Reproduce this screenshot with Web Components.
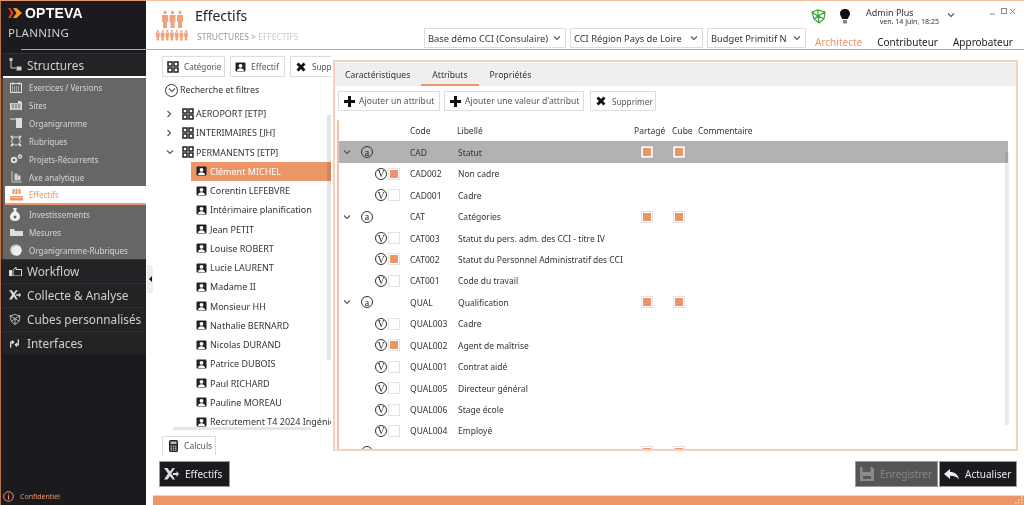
<!DOCTYPE html>
<html lang="fr">
<head>
<meta charset="utf-8">
<title>Effectifs</title>
<style>
html, body { margin: 0; height: 505px; overflow: hidden; background: #fff; }
body { font-family: "Noto Sans", "Open Sans", sans-serif; color: #333; }
</style>
</head>
<body>
<app-shell></app-shell>
<script>
const ORANGE = "#ec9668";

const ICONS = {
    cat: `<svg width="12" height="12" viewBox="0 0 12 12" fill="none" stroke="#222" stroke-width="1.5"><rect x="1" y="1" width="4" height="4"/><rect x="7" y="1" width="4" height="4"/><rect x="1" y="7" width="4" height="4"/><rect x="7" y="7" width="4" height="4"/></svg>`,
    badge: `<svg width="11" height="10" viewBox="0 0 11 10"><rect x=".5" y=".5" width="10" height="9" rx="1" fill="#222"/><circle cx="5.5" cy="3.8" r="1.9" fill="#fff"/><path d="M2 9c.3-2 1.6-2.8 3.5-2.8S8.700 7 9 9z" fill="#fff"/></svg>`,
    plus: `<svg style="margin-right:-2px" width="13" height="13" viewBox="0 0 13 13"><path d="M5 1h3v4h4v3H8v4H5V8H1V5h4z" fill="#111"/></svg>`,
    cross: `<svg width="12" height="12" viewBox="0 0 12 12"><path d="M1.500 3.500l2-2L6 4l2.500-2.500 2 2L8 6l2.500 2.500-2 2L6 8l-2.500 2.500-2-2L4 6z" fill="#111"/></svg>`,
    calc: `<svg width="9" height="12" viewBox="0 0 9 12"><rect width="9" height="12" rx="1.500" fill="#222"/><rect x="1.500" y="1.500" width="6" height="2.500" fill="#bbb"/><path d="M1.500 5.500h1.500v1.200H1.500zM3.800 5.500h1.500v1.200H3.800zM6 5.500h1.500v1.200H6zM1.500 7.500h1.500v1.200H1.500zM3.800 7.500h1.500v1.200H3.800zM6 7.500h1.500v1.200H6zM1.500 9.500h1.500v1.200H1.500zM3.800 9.500h1.500v1.200H3.800zM6 9.500h1.500v1.200H6z" fill="#ccc"/></svg>`,
    right: `<svg width="6" height="8" viewBox="0 0 6 8" fill="none" stroke="#555" stroke-width="1.100"><path d="M1.500 1l3 3-3 3"/></svg>`,
    down: `<svg width="8" height="6" viewBox="0 0 8 6" fill="none" stroke="#555" stroke-width="1.100"><path d="M1 1.500l3 3 3-3"/></svg>`,
    collect: `<svg width="15" height="12" viewBox="0 0 15 12"><path d="M0 0h3.500l2.500 3.500L8.500 0H11L7.300 5.500 11 11.500H8.500L6 8l-2.500 3.500H0l4-6z" fill="#ddd"/><path d="M9 5h3.500V3l2.500 3-2.500 3V7H9z" fill="#ddd"/></svg>`,
    save: `<svg width="14" height="14" viewBox="0 0 14 14"><path d="M0 0h2.500v5h8V0H12l2 2v12H0z" fill="#8a8a8a"/><rect x="3" y="9" width="8" height="3" fill="#555"/></svg>`,
    back: `<svg width="15" height="11" viewBox="0 0 15 11"><path d="M6 0v3c5 0 8 2.500 9 7.500-2-2.700-4.500-3.800-9-3.800V10L0 5z" fill="#eee"/></svg>`
};

const SIDE_ICONS = {
    structures: `<svg width="14" height="14" viewBox="0 0 14 14" fill="none" stroke="#ccc"><rect x="1" y="0.500" width="2" height="2" fill="#ccc"/><path d="M2 3v7h5"/><rect x="8" y="9" width="4" height="3" fill="#ccc"/></svg>`,
    exercices: `<svg width="12" height="11" viewBox="0 0 12 11" fill="none" stroke="#ddd"><rect x=".5" y="1.500" width="11" height="9"/><path d="M3 0v3M9 0v3"/><path d="M2 5h8M2 7h8M2 9h8" stroke-dasharray="1 1"/></svg>`,
    sites: `<svg width="12" height="10" viewBox="0 0 12 10"><path d="M0 3h8V1h3v1h1v8H0z" fill="#ddd"/><path d="M1 5h10M1 7h10M3 3v7M6 3v7M9 3v7" stroke="#666" stroke-width=".6"/></svg>`,
    orga: `<svg width="12" height="10" viewBox="0 0 12 10"><path d="M0 1h6" stroke="#ddd"/><rect x="6" y="0" width="6" height="10" fill="#ddd"/></svg>`,
    rubriques: `<svg width="12" height="12" viewBox="0 0 12 12" fill="none" stroke="#ddd"><circle cx="6" cy="6" r="4.200"/><path d="M1 1l2 2M11 1L9 3M1 11l2-2M11 11L9 9" stroke-width="2"/></svg>`,
    projets: `<svg width="13" height="10" viewBox="0 0 13 10" fill="none" stroke="#ddd"><circle cx="4" cy="6" r="2.200" stroke-width="2"/><circle cx="10" cy="2.500" r="1.500" stroke-width="1.400"/></svg>`,
    axe: `<svg width="12" height="12" viewBox="0 0 12 12" fill="none" stroke="#ccc"><path d="M2 0v11h10"/><rect x="5" y="3" width="2" height="6" fill="#ddd"/><rect x="8" y="5" width="2" height="4" fill="#ddd"/></svg>`,
    effectifs: `<svg width="13" height="12" viewBox="0 0 13 12" fill="${ORANGE}"><rect x="2.500" y="0" width="2" height="5"/><rect x="5.500" y="0" width="2" height="5"/><rect x="8.500" y="0" width="2" height="5"/><rect x="0" y="7" width="13" height="1.500"/><rect x="0" y="9" width="13" height="2.500"/></svg>`,
    invest: `<svg width="10" height="13" viewBox="0 0 10 13"><path d="M3 0h4L6 3c2.500 1.500 4 3.500 4 6 0 2.500-2 4-5 4s-5-1.500-5-4c0-2.500 1.500-4.500 4-6z" fill="#eee"/><circle cx="5" cy="9" r="1.500" fill="#666"/></svg>`,
    mesures: `<svg width="13" height="7" viewBox="0 0 13 7"><path d="M0 0h4l1 2h8v5H0z" fill="#ddd"/></svg>`,
    orgarub: `<svg width="12" height="12" viewBox="0 0 12 12" fill="none" stroke="#eee" stroke-width="1.200"><circle cx="6" cy="6" r="5"/><path d="M3 8.500A4 4 0 0 1 8.500 3L11 6A4.500 4.500 0 0 1 6 11z" fill="#eee"/></svg>`,
    workflow: `<svg width="13" height="9" viewBox="0 0 13 9"><rect x="0" y="3" width="3" height="6" fill="#ddd"/><path d="M4 3.500L7 0v2.500h5.500V9H4z" fill="none" stroke="#ddd"/></svg>`,
    collect: `<svg width="12" height="10" viewBox="0 0 15 12"><path d="M0 0h3.500l2.500 3.500L8.500 0H11L7.300 5.500 11 11.500H8.500L6 8l-2.500 3.500H0l4-6z" fill="#ddd"/><path d="M9 5h3.500V3l2.500 3-2.500 3V7H9z" fill="#ddd"/></svg>`,
    cubes: `<svg width="12" height="11" viewBox="0 0 13 12" fill="none" stroke="#ccc" stroke-width=".9"><path d="M1 2l5-1.500L12 2l-1 6-4.500 3.500L2.500 8z"/><path d="M1 2l5.500 3L12 2M6.500 5v6.500M2.500 8l4-3 4.500 3"/></svg>`,
    interfaces: `<svg width="11" height="9" viewBox="0 0 13 10" fill="none" stroke="#ddd" stroke-width="1.500"><path d="M2 10V3.500h3M3.500 1.500L5.500 3.500 3.500 5.500"/><path d="M11 0v6.500H8M9.500 8.500L7.500 6.500 9.500 4.500"/></svg>`
};

class SideItem extends HTMLElement {
    connectedCallback() {
        this.attachShadow({mode: "open"}).innerHTML = `
        <style>
        :host { display: flex; align-items: center; height: 18px; padding-left: 7px; font-size: 8px; color: #d6d6d6; white-space: nowrap; }
        :host([active]) { height: 17px; margin-left: 2px; padding-left: 5px; background: #fff; color: ${ORANGE}; border-bottom: 2px solid ${ORANGE}; }
        .ic { width: 19px; display: flex; align-items: center; }
        </style>
        <span class="ic">${SIDE_ICONS[this.getAttribute("icon")]}</span><slot></slot>`;
    }
}
customElements.define("side-item", SideItem);

class SideSection extends HTMLElement {
    connectedCallback() {
        this.attachShadow({mode: "open"}).innerHTML = `
        <style>
        :host { display: flex; align-items: center; box-sizing: border-box; height: 23px; margin: 0 0 1px 1px; padding-left: 7px; background: #232225; color: #d0d0d0; font-size: 11.800px; border-top: 1px solid #333; white-space: nowrap; }
        .ic { width: 18px; display: flex; flex: none; }
        </style>
        <span class="ic">${SIDE_ICONS[this.getAttribute("icon")]}</span><slot></slot>`;
    }
}
customElements.define("side-section", SideSection);

class SideBar extends HTMLElement {
    connectedCallback() {
        this.attachShadow({mode: "open"}).innerHTML = `
        <style>
        :host { display: flex; flex-direction: column; width: 145px; height: 504px; background: #1b1a1f; border-top: 1px solid ${ORANGE}; border-left: 1px solid #b5734e; position: relative; }
        .top { height: 48px; box-sizing: border-box; padding: 5px 0 0 7px; }
        .logo { display: flex; align-items: center; color: #fff; font: 700 14px/14px "Liberation Sans", sans-serif; letter-spacing: .2px; }
        .logo svg { margin-right: 3px; }
        .app { color: #d0d0d0; font-size: 11.500px; margin-top: 5px; letter-spacing: .3px; }
        .line { height: 1px; background: ${ORANGE}; margin-left: 20px; }
        .gap { height: 3px; }
        .sub { background: #666; border-left: 2px solid #5a3323; }
        .white { height: 2px; background: #fff; margin-left: 2px; }
        .foot { margin-top: auto; display: flex; align-items: center; gap: 6px; padding: 0 0 3px 2px; color: ${ORANGE}; font-size: 7px; }
        </style>
        <div class="top">
            <div class="logo"><svg width="14" height="10" viewBox="0 0 14 10"><path d="M0 0h2.500l3 5-3 5H0l3-5z" fill="#e23b22"/><path d="M5 0h3.500L14 5l-5.500 5H5l3.500-5z" fill="#f59a23"/></svg><span>OPTEVA</span></div>
            <div class="app">PLANNING</div>
        </div>
        <div class="line"></div>
        <div class="gap"></div>
        <side-section icon="structures" style="margin-bottom:0">Structures</side-section>
        <div class="white"></div>
        <div class="sub">
            <side-item icon="exercices">Exercices / Versions</side-item>
            <side-item icon="sites">Sites</side-item>
            <side-item icon="orga">Organigramme</side-item>
            <side-item icon="rubriques">Rubriques</side-item>
            <side-item icon="projets">Projets-Récurrents</side-item>
            <side-item icon="axe">Axe analytique</side-item>
            <side-item icon="effectifs" active>Effectifs</side-item>
            <side-item icon="invest">Investissements</side-item>
            <side-item icon="mesures">Mesures</side-item>
            <side-item icon="orgarub">Organigramme-Rubriques</side-item>
        </div>
        <side-section icon="workflow">Workflow</side-section>
        <side-section icon="collect">Collecte &amp; Analyse</side-section>
        <side-section icon="cubes">Cubes personnalisés</side-section>
        <side-section icon="interfaces">Interfaces</side-section>
        <div class="foot"><svg width="11" height="11" viewBox="0 0 11 11" fill="none" stroke="${ORANGE}"><circle cx="5.500" cy="5.500" r="4.800"/><path d="M5.500 2.500v1M5.500 4.500v4"/></svg><span>Confidentiel</span></div>`;
    }
}
customElements.define("side-bar", SideBar);

class ComboBox extends HTMLElement {
    connectedCallback() {
        this.attachShadow({mode: "open"}).innerHTML = `
        <style>
        :host { display: flex; align-items: center; justify-content: space-between; box-sizing: border-box; height: 20px; padding: 0 4px 0 3px; border: 1px solid #ddd; font-size: 9.300px; color: #333; white-space: nowrap; overflow: hidden; }
        svg { flex: none; margin-left: 4px; }
        </style>
        <slot></slot>${ICONS.down}`;
    }
}
customElements.define("combo-box", ComboBox);

class AppHeader extends HTMLElement {
    connectedCallback() {
        let people = "";
        for (let i = 0; i < 3; i++) people += `<use href="#p" transform="translate(${7 + i * 7.500} 10) scale(1)"/>`;
        for (let i = 0; i < 7; i++) people += `<use href="#p" transform="translate(${1 + i * 4.700} 29) scale(.62)"/>`;
        this.attachShadow({mode: "open"}).innerHTML = `
        <style>
        :host { display: flex; height: 48px; background: #fff; border-top: 1px solid #f5bfa2; border-bottom: 1px solid ${ORANGE}; }
        .pic { width: 40px; padding-left: 9px; flex: none; }
        .titles { flex: none; width: 229px; }
        h1 { margin: 6px 0 0; font-size: 14px; line-height: 18px; font-weight: 400; color: #222; }
        .crumb { margin: 6px 0 0 2px; font-size: 8.500px; line-height: 12px; color: #999; }
        .crumb span { color: #ccc; }
        .combos { display: flex; gap: 4px; align-self: flex-end; margin-bottom: 1px; flex: none; }
        .right { margin-left: 5px; flex: 1; display: flex; flex-direction: column; }
        .status { display: flex; height: 30px; align-items: flex-start; }
        .status .net { margin-top: 8px; }
        .status .bulb { margin: 8px 0 0 14px; }
        .who { margin: 6px 0 0 16px; font-size: 9px; line-height: 11px; color: #333; width: 73px; }
        .who small { display: block; font-size: 7px; line-height: 8px; text-align: right; color: #333; white-space: nowrap; }
        .chev { margin: 11px 0 0 8px; display: flex; }
        .win { margin: 6px 0 0 35px; display: flex; }
        .roles { display: flex; font-size: 10px; line-height: 22px; color: #222; padding-left: 4px; height: 18px; }
        .roles span { margin-right: 15px; white-space: nowrap; }
        .roles span:first-child { color: ${ORANGE}; }
        </style>
        <div class="pic"><svg width="36" height="42" viewBox="0 0 36 42" fill="#f2a27a"><defs><g id="p"><circle cx="3" cy="1.500" r="1.700"/><path d="M0 4h6v7H5v6H1v-6H0z"/></g></defs>${people}</svg></div>
        <div class="titles">
            <h1>Effectifs</h1>
            <div class="crumb">STRUCTURES &gt; <span>EFFECTIFS</span></div>
        </div>
        <div class="combos">
            <combo-box style="width:142px">Base démo CCI (Consulaire)</combo-box>
            <combo-box style="width:133px">CCI Région Pays de Loire</combo-box>
            <combo-box style="width:99px">Budget Primitif N</combo-box>
        </div>
        <div class="right">
            <div class="status">
                <svg class="net" width="15" height="15" viewBox="0 0 15 15" fill="none" stroke="#3aa335" stroke-width="1.200"><path d="M1 3l6-2 7 2-1 7-5 4-5-4zM1 3l6 4 7-4M7 7l1 7M3 10l4-3 6 3M7 1v6" /></svg>
                <svg class="bulb" width="10" height="15" viewBox="0 0 10 15"><path d="M5 0c3 0 5 2 5 4.800 0 2-1.500 3-2.200 5.200H2.200C1.500 7.800 0 6.800 0 4.800 0 2 2 0 5 0z" fill="#111"/><rect x="3" y="11" width="4" height="3.500" fill="#888"/></svg>
                <div class="who">Admin Plus<small>ven. 14 juin, 18:25</small></div>
                <span class="chev">${ICONS.down}</span>
                <div class="win">
                    <svg width="25" height="9" viewBox="0 0 25 9" fill="none" stroke="#888"><path d="M0 7h5"/><rect x="11.500" y="1.500" width="5" height="5"/><path d="M20 2l5 5M25 2l-5 5"/></svg>
                </div>
            </div>
            <div class="roles"><span>Architecte</span><span>Contributeur</span><span>Approbateur</span></div>
        </div>`;
    }
}
customElements.define("app-header", AppHeader);

class ToolBtn extends HTMLElement {
    connectedCallback() {
        this.attachShadow({mode: "open"}).innerHTML = `
        <style>
        :host { display: inline-flex; flex: none; align-items: center; box-sizing: border-box; height: 20px; padding: 0 3px 0 4px; gap: 5px; border: 1px solid #ddd; background: #fff; font-size: 8.600px; color: #555; white-space: nowrap; }
        span { display: flex; }
        </style>
        <span>${ICONS[this.getAttribute("icon")]}</span><slot></slot>`;
    }
}
customElements.define("tool-btn", ToolBtn);

class ActionBtn extends HTMLElement {
    connectedCallback() {
        this.attachShadow({mode: "open"}).innerHTML = `
        <style>
        :host { display: inline-flex; align-items: center; box-sizing: border-box; height: 26px; padding: 0 4px; gap: 6px; background: #1b1a1f; border: 1px solid #999; color: #e8e8e8; font-size: 10px; white-space: nowrap; }
        :host([disabled]) { background: #555; color: #888; }
        span { display: flex; }
        </style>
        <span>${ICONS[this.getAttribute("icon")]}</span><slot></slot>`;
    }
}
customElements.define("action-btn", ActionBtn);

class TreeRow extends HTMLElement {
    connectedCallback() {
        const kind = this.getAttribute("kind");
        const arrow = kind === "open" ? ICONS.down : ICONS.right;
        this.attachShadow({mode: "open"}).innerHTML = `
        <style>
        :host { display: flex; align-items: center; height: 19.250px; font-size: 9px; color: #333; white-space: nowrap; box-sizing: border-box; }
        :host([kind="leaf"]) { padding-left: 5px; margin-left: 29px; gap: 3px; }
        :host([selected]) { color: #fff; background: ${ORANGE}; }
        .a { width: 16px; margin-left: 4px; display: flex; }
        .g { margin-right: 2px; display: flex; }
        </style>
        ${kind === "leaf"
            ? `<span style="display:flex">${ICONS.badge}</span>`
            : `<span class="a">${arrow}</span><span class="g">${ICONS.cat}</span>`}
        <slot></slot>`;
    }
}
customElements.define("tree-row", TreeRow);

class TreePanel extends HTMLElement {
    connectedCallback() {
        const leaves = ["Clément MICHEL", "Corentin LEFEBVRE", "Intérimaire planification", "Jean PETIT", "Louise ROBERT", "Lucie LAURENT", "Madame II", "Monsieur HH", "Nathalie BERNARD", "Nicolas DURAND", "Patrice DUBOIS", "Paul RICHARD", "Pauline MOREAU", "Recrutement T4 2024 Ingénieur"];
        this.attachShadow({mode: "open"}).innerHTML = `
        <style>
        :host { display: flex; flex-direction: column; flex: none; width: 169px; margin-left: 9px; margin-right: 2px; height: 405px; padding-top: 6px; box-sizing: border-box; overflow: hidden; }
        .bar { display: flex; gap: 5px; height: 21px; overflow: hidden; flex: none; }
        .bar tool-btn { height: 21px; }
        .filter { display: flex; align-items: center; gap: 2px; height: 26px; padding-left: 3px; font-size: 8.800px; color: #333; flex: none; }
        .filter i { width: 11px; height: 11px; border: 1px solid #333; border-radius: 50%; display: flex; align-items: center; justify-content: center; }
        .list { position: relative; flex: none; height: 326px; margin-top: 1px; overflow: hidden; }
        .vs { position: absolute; right: 0; top: 11px; width: 4px; height: 245px; background: #e4e4e4; mix-blend-mode: multiply; }
        .hs { position: absolute; left: 11px; bottom: 0; width: 138px; height: 3px; background: #e6e6e6; }
        .calc { margin-top: 5px; }
        .calc tool-btn { width: 54px; padding-left: 6px; gap: 6px; }
        </style>
        <div class="bar">
            <tool-btn icon="cat" style="width:63px;font-size:8.200px">Catégorie</tool-btn>
            <tool-btn icon="badge" style="width:55px">Effectif</tool-btn>
            <tool-btn icon="cross" style="font-size:8.200px">Supprimer</tool-btn>
        </div>
        <div class="filter"><i>${ICONS.down}</i><span>Recherche et filtres</span></div>
        <div class="list">
            <tree-row kind="closed">AEROPORT [ETP]</tree-row>
            <tree-row kind="closed">INTERIMAIRES [JH]</tree-row>
            <tree-row kind="open">PERMANENTS [ETP]</tree-row>
            ${leaves.map((n, i) => `<tree-row kind="leaf" ${i === 0 ? "selected" : ""}>${n}</tree-row>`).join("")}
            <div class="vs"></div>
            <div class="hs"></div>
        </div>
        <div class="calc"><tool-btn icon="calc">Calculs</tool-btn></div>`;
    }
}
customElements.define("tree-panel", TreePanel);

class MarkDot extends HTMLElement {
    connectedCallback() {
        this.attachShadow({mode: "open"}).innerHTML = `
        <style>
        :host { display: inline-flex; align-items: center; justify-content: center; box-sizing: border-box; width: 12px; height: 12px; border: 1px solid #333; border-radius: 50%; font: 10px/9px "Liberation Serif", serif; color: #222; }
        </style><slot></slot>`;
    }
}
customElements.define("mark-dot", MarkDot);

class CheckBox extends HTMLElement {
    connectedCallback() {
        this.attachShadow({mode: "open"}).innerHTML = `
        <style>
        :host { display: inline-block; box-sizing: border-box; width: 12px; height: 12px; border: 1px solid #e2e2e2; background: #fff; padding: 1px; }
        div { width: 100%; height: 100%; }
        :host([on]) div { background: ${ORANGE}; }
        </style><div></div>`;
    }
}
customElements.define("check-box", CheckBox);

class AttrRow extends HTMLElement {
    connectedCallback() {
        const type = this.getAttribute("type");
        const code = this.getAttribute("code") || "";
        const label = this.getAttribute("label") || "";
        const on = this.hasAttribute("on") ? "on" : "";
        const lead = type === "attr"
            ? `<span class="arrow">${ICONS.down}</span><mark-dot>a</mark-dot>`
            : `<span class="in"><mark-dot>V</mark-dot><check-box ${on}></check-box></span>`;
        this.attachShadow({mode: "open"}).innerHTML = `
        <style>
        :host { display: grid; grid-template-columns: 71px 48px 173px 32px 32px; align-items: center; height: 21.440px; font-size: 8.500px; color: #333; white-space: nowrap; }
        :host([hl]) { background: #b2b2b2; height: 22px; }
        .lead { display: flex; align-items: center; }
        .arrow { display: flex; margin-left: 4px; width: 18px; }
        .in { display: flex; align-items: center; gap: 1px; margin-left: 36px; }
        .box { display: flex; justify-content: center; }
        </style>
        <div class="lead">${lead}</div><div>${code}</div><div>${label}</div>
        ${type === "attr" ? `<div class="box"><check-box on></check-box></div><div class="box"><check-box on></check-box></div>` : ""}`;
    }
}
customElements.define("attr-row", AttrRow);

class AttrPanel extends HTMLElement {
    connectedCallback() {
        const rows = [
            ["attr", "CAD", "Statut", 0, 1],
            ["val", "CAD002", "Non cadre", 1],
            ["val", "CAD001", "Cadre", 0],
            ["attr", "CAT", "Catégories"],
            ["val", "CAT003", "Statut du pers. adm. des CCI - titre IV", 0],
            ["val", "CAT002", "Statut du Personnel Administratif des CCI", 1],
            ["val", "CAT001", "Code du travail", 0],
            ["attr", "QUAL", "Qualification"],
            ["val", "QUAL003", "Cadre", 0],
            ["val", "QUAL002", "Agent de maîtrise", 1],
            ["val", "QUAL001", "Contrat aidé", 0],
            ["val", "QUAL005", "Directeur général", 0],
            ["val", "QUAL006", "Stage école", 0],
            ["val", "QUAL004", "Employé", 0],
            ["attr", "", ""]
        ];
        this.attachShadow({mode: "open"}).innerHTML = `
        <style>
        :host { display: flex; flex-direction: column; box-sizing: border-box; flex: none; width: 685px; height: 391px; margin-top: 10px; border: 2px solid #f8cfba; overflow: hidden; }
        .tabs { display: flex; flex: none; height: 23px; margin-top: 1px; background: #efefef; font-size: 8.600px; color: #333; }
        .tabs span { padding: 0 11px; line-height: 24px; }
        .tabs span:first-child { margin-left: -1px; }
        .tabs .on { border-bottom: 2px solid ${ORANGE}; height: 21px; }
        .tools { display: flex; flex: none; gap: 4px; padding: 5px 3px 0; height: 20px; }
        .tools tool-btn:last-child { margin-left: 2px; }
        .grid { position: relative; flex: 1; margin: 9px 0 0 2px; border-left: 2px solid #f5bfa2; overflow: hidden; }
        .head { display: grid; grid-template-columns: 71px 47px 177px 38px 26px 80px; height: 21px; align-items: center; font-size: 8.500px; color: #333; white-space: nowrap; }
        .sb { position: absolute; right: 7px; top: 32px; width: 4px; height: 273px; background: #d8d8d8; mix-blend-mode: multiply; opacity: .55; }
        .rows { width: 669px; }
        </style>
        <div class="tabs"><span>Caractéristiques</span><span class="on">Attributs</span><span>Propriétés</span></div>
        <div class="tools">
            <tool-btn icon="plus" style="width:102px">Ajouter un attribut</tool-btn>
            <tool-btn icon="plus" style="width:140px">Ajouter une valeur d'attribut</tool-btn>
            <tool-btn icon="cross" style="width:66px;font-size:8.200px">Supprimer</tool-btn>
        </div>
        <div class="grid">
            <div class="head"><span></span><span>Code</span><span>Libellé</span><span>Partagé</span><span>Cube</span><span>Commentaire</span></div>
            <div class="rows">
            ${rows.map(r => `<attr-row type="${r[0]}" code="${r[1]}" label="${r[2]}" ${r[3] ? "on" : ""} ${r[4] ? "hl" : ""}></attr-row>`).join("")}
            </div>
            <div class="sb"></div>
        </div>`;
    }
}
customElements.define("attr-panel", AttrPanel);

class AppShell extends HTMLElement {
    connectedCallback() {
        this.attachShadow({mode: "open"}).innerHTML = `
        <style>
        :host { display: flex; width: 1024px; height: 505px; position: relative; }
        .main { flex: 1; display: flex; flex-direction: column; min-width: 0; }
        app-header { flex: none; }
        .body { display: flex; flex: none; height: 405px; margin-left: 7px; }
        .actions { display: flex; flex: none; height: 40px; margin-left: 7px; padding: 6px 7px 8px 6px; box-sizing: border-box; gap: 1px; }
        .spacer { flex: 1; }
        .foot { flex: 1; margin-left: 7px; background: ${ORANGE}; border-top: 1px solid #f8cfba; }
        .handle { position: absolute; left: 147px; top: 265px; width: 6px; height: 28px; background: #eee; border-radius: 0 3px 3px 0; display: flex; align-items: center; justify-content: center; }
        .handle i { border: 3px solid transparent; border-right-color: #111; border-left: 0; }
        .grip { position: absolute; right: 1px; bottom: 1px; }
        </style>
        <side-bar></side-bar>
        <div class="main">
            <app-header></app-header>
            <div class="body">
                <tree-panel></tree-panel>
                <attr-panel></attr-panel>
            </div>
            <div class="actions">
                <action-btn icon="collect" style="width:71px">Effectifs</action-btn>
                <span class="spacer"></span>
                <action-btn icon="save" disabled style="width:83px">Enregistrer</action-btn>
                <action-btn icon="back" style="width:78px">Actualiser</action-btn>
            </div>
            <div class="foot"></div>
        </div>
        <div class="handle"><i></i></div>
        <svg class="grip" width="8" height="8" viewBox="0 0 8 8" fill="#f8d5c0"><rect x="6" y="0" width="1.500" height="1.500"/><rect x="3" y="3" width="1.500" height="1.500"/><rect x="6" y="3" width="1.500" height="1.500"/><rect x="0" y="6" width="1.500" height="1.500"/><rect x="3" y="6" width="1.500" height="1.500"/><rect x="6" y="6" width="1.500" height="1.500"/></svg>`;
    }
}
customElements.define("app-shell", AppShell);
</script>
</body>
</html>
